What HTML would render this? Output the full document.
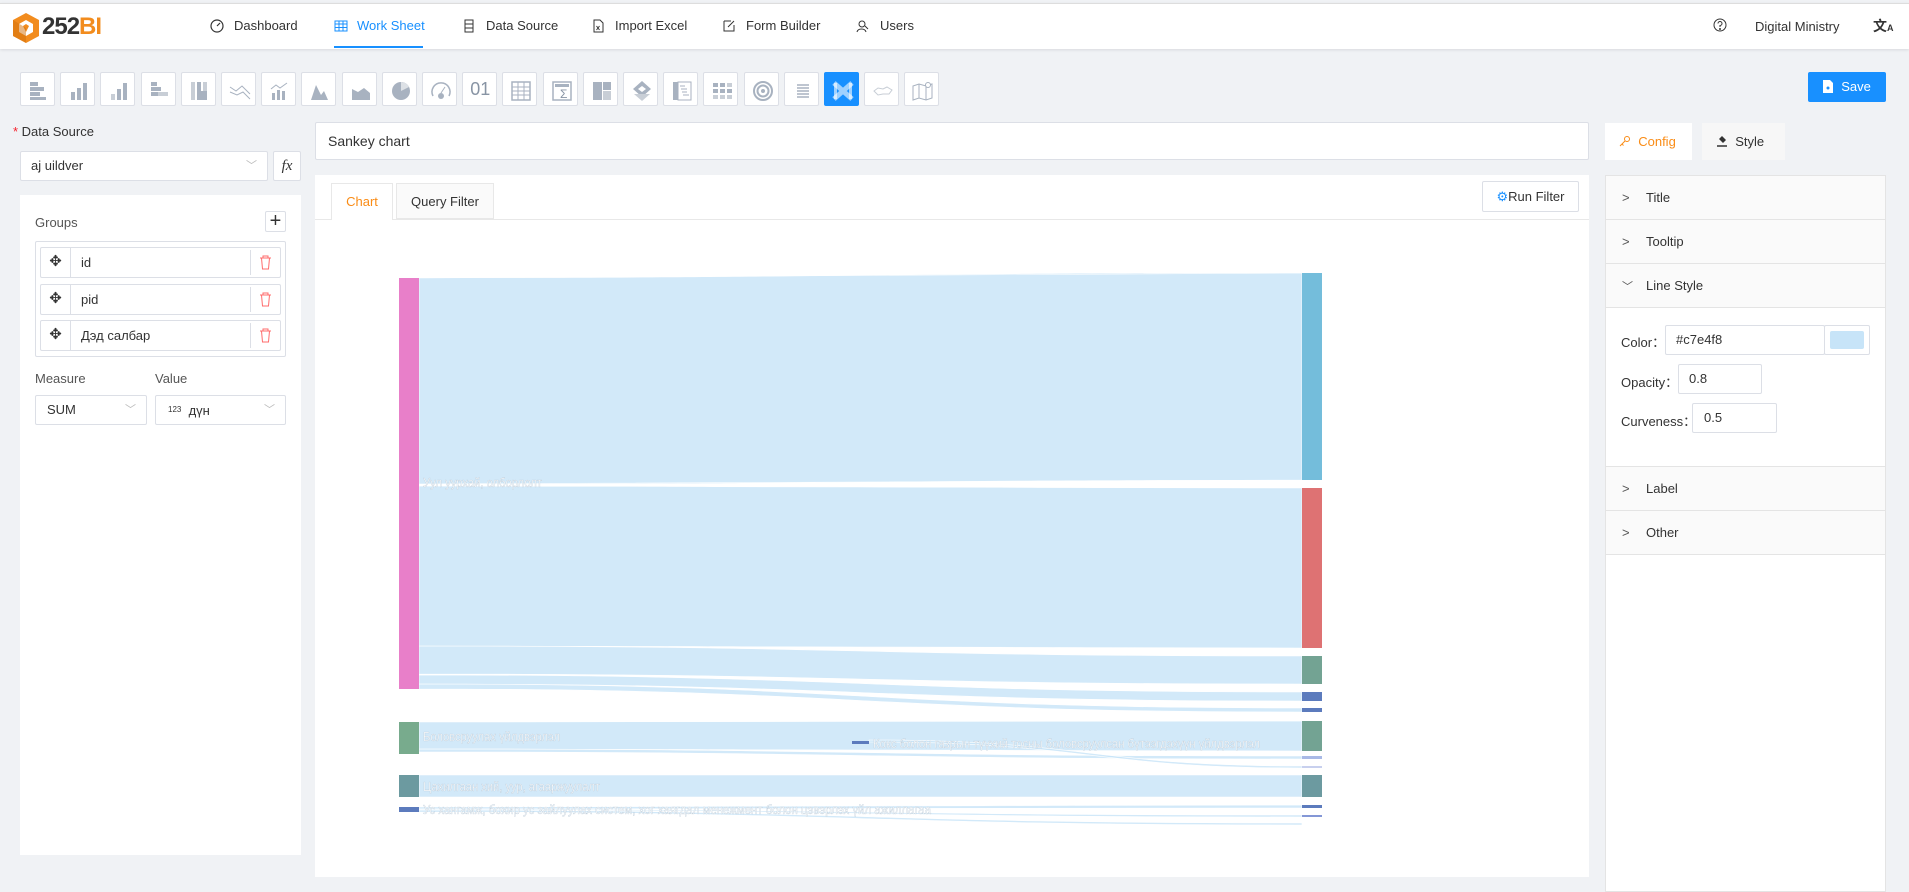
<!DOCTYPE html>
<html><head><meta charset="utf-8">
<style>
*{box-sizing:border-box;margin:0;padding:0}
body{width:1909px;height:892px;background:#f0f2f5;font-family:"Liberation Sans","Noto Sans CJK SC",sans-serif;font-size:13px;color:#333;position:relative;overflow:hidden}
.abs{position:absolute}
.hdr{left:0;top:3px;width:1909px;height:46px;background:#fff;border-top:1px solid #ddd;box-shadow:0 1px 3px rgba(0,0,0,.1)}
.nav{top:18px;font-size:13px;color:#333;display:flex;align-items:center;gap:6px}
.tb{top:72px;width:35px;height:34px;background:#fff;border:1px solid #dcdfe6;border-radius:2px}
.tb svg{position:absolute;left:6px;top:6px}
.box{background:#fff;border:1px solid #dcdfe6;border-radius:2px}
.row{background:#fafafa;border-bottom:1px solid #e4e4e4;height:44px;line-height:44px;padding-left:16px;font-size:13px;color:#333;position:absolute;left:0;width:100%}
.row span.ch{display:inline-block;width:24px;color:#555}
.lbl{font-size:13px;color:#333}
</style></head><body>

<div class="abs hdr"></div>
<svg class="abs" style="left:10px;top:12px" width="32" height="32" viewBox="0 0 32 32"><path d="M16 1 L29 8 L29 24 L16 31 L3 24 L3 8Z" fill="#f28c1e"/><path d="M16 8 L23 12 L23 20 L16 24 L9 20 L9 12Z" fill="#fff"/><path d="M16 12 L19 14 L16 20 L13 14Z" fill="#f28c1e"/><path d="M3 8 L16 16 L16 31 L3 24Z" fill="#d16f0a" opacity=".5"/></svg>
<div class="abs" style="left:42px;top:13px;font-size:24px;font-weight:bold;color:#333;letter-spacing:-1px">252<span style="color:#f28c1e">BI</span></div>

<div class="abs nav" style="left:210px"><svg width="14" height="14" viewBox="0 0 14 14"><circle cx="7" cy="7" r="6" fill="none" stroke="#333" stroke-width="1.2"/><path d="M7 7 L10 4" stroke="#333" stroke-width="1.2"/></svg><span style="margin-left:4px">Dashboard</span></div>
<div class="abs nav" style="left:334px;color:#1890ff"><svg width="14" height="14" viewBox="0 0 14 14" fill="none" stroke="#1890ff"><rect x="1" y="2" width="12" height="10"/><path d="M1 5h12M1 8.5h12M5 2v10M9 2v10"/></svg><span style="margin-left:3px">Work Sheet</span></div>
<div class="abs" style="left:334px;top:46px;width:89px;height:2px;background:#1890ff"></div>
<div class="abs nav" style="left:462px"><svg width="14" height="14" viewBox="0 0 14 14" fill="none" stroke="#333"><rect x="3" y="1" width="8" height="12"/><path d="M3 5h8M3 9h8"/></svg><span style="margin-left:4px">Data Source</span></div>
<div class="abs nav" style="left:591px"><svg width="14" height="14" viewBox="0 0 14 14" fill="none" stroke="#333"><path d="M3 1h6l3 3v9H3z"/><path d="M5.5 7l3 4M8.5 7l-3 4"/></svg><span style="margin-left:4px">Import Excel</span></div>
<div class="abs nav" style="left:722px"><svg width="14" height="14" viewBox="0 0 14 14" fill="none" stroke="#333"><path d="M2 2h7M2 2v10h10V6"/><path d="M6 8l6-6"/></svg><span style="margin-left:4px">Form Builder</span></div>
<div class="abs nav" style="left:856px"><svg width="14" height="14" viewBox="0 0 14 14" fill="none" stroke="#333"><circle cx="6" cy="5" r="3"/><path d="M1 13c1-4 8-4 9 0M9 7l3 3"/></svg><span style="margin-left:4px">Users</span></div>
<svg class="abs" style="left:1713px;top:18px" width="14" height="14" viewBox="0 0 14 14" fill="none" stroke="#333"><circle cx="7" cy="7" r="6"/><path d="M5 5.5a2 2 0 1 1 2 2v1.5"/><circle cx="7" cy="11" r=".5"/></svg>
<div class="abs" style="left:1755px;top:19px;font-size:13px">Digital Ministry</div>
<div class="abs" style="left:1873px;top:16px;font-size:14px;font-weight:bold">文<span style="font-size:9px">A</span></div>

<div id="tbar"></div>
<script>
(function(){
var g='#a8b2c0',h='';
var icons=[
'<rect x="3" y="3" width="8" height="4" fill="G"/><rect x="3" y="8" width="14" height="4" fill="G"/><rect x="3" y="13" width="10" height="4" fill="G"/><rect x="3" y="18" width="16" height="3" fill="G"/>',
'<rect x="4" y="13" width="4" height="8" fill="G"/><rect x="10" y="9" width="4" height="12" fill="G"/><rect x="16" y="4" width="4" height="17" fill="G"/>',
'<rect x="4" y="15" width="4" height="6" fill="#c8ced6"/><rect x="10" y="10" width="4" height="11" fill="G"/><rect x="16" y="4" width="4" height="17" fill="G"/>',
'<rect x="3" y="3" width="6" height="4" fill="G"/><rect x="3" y="8" width="10" height="4" fill="G"/><rect x="3" y="13" width="7" height="4" fill="G"/><rect x="10" y="13" width="10" height="4" fill="#c8ced6"/>',
'<rect x="3" y="3" width="4" height="18" fill="#c8ced6"/><rect x="9" y="3" width="4" height="18" fill="G"/><rect x="15" y="3" width="4" height="18" fill="#c8ced6"/><rect x="9" y="12" width="10" height="9" fill="G"/>',
'<path d="M2 8l6 4 6-5 8 8M2 13l7 3 6-3 7 7" fill="none" stroke="G"/>',
'<rect x="4" y="14" width="3" height="7" fill="G"/><rect x="9" y="11" width="3" height="10" fill="G"/><rect x="14" y="12" width="3" height="9" fill="G"/><path d="M3 10l5-4 4 3 7-5" fill="none" stroke="G"/>',
'<path d="M3 21L8 6l5 10 3-4 4 9z" fill="G"/>',
'<path d="M3 21V10l6 3 6-4 6 5v7z" fill="G"/>',
'<circle cx="12" cy="12" r="9" fill="G"/><path d="M12 12V3a9 9 0 0 1 8 5z" fill="#dde1e6"/>',
'<path d="M4 17a9 9 0 1 1 16 0" fill="none" stroke="G" stroke-width="1.5"/><path d="M12 14l4-6" stroke="G"/><circle cx="12" cy="17" r="3" fill="G"/>',
'TEXT',
'<rect x="3" y="3" width="18" height="18" fill="none" stroke="G" stroke-width="1.5"/><path d="M3 8h18M3 12h18M3 16h18M9 3v18M15 3v18" stroke="G"/>',
'<rect x="3" y="3" width="18" height="18" fill="none" stroke="G" stroke-width="1.5"/><text x="10" y="19" font-size="12" fill="#8894a4">Σ</text><rect x="5" y="5" width="14" height="3" fill="G"/>',
'<rect x="3" y="3" width="9" height="18" fill="G"/><rect x="13" y="3" width="8" height="8" fill="G"/><rect x="13" y="12" width="8" height="9" fill="#c8ced6"/>',
'<path d="M12 2l9 8-9 8-9-8z" fill="G"/><path d="M12 7l4 3-4 3-4-3z" fill="#fff"/><path d="M4 15l8 7 8-7" fill="#c8ced6"/>',
'<rect x="3" y="3" width="5" height="18" fill="G"/><rect x="8" y="3" width="13" height="18" fill="none" stroke="G"/><path d="M10 7h5M11 10h6M12 13h5M13 16h6" stroke="G"/>',
'<rect x="3" y="4" width="5" height="4" fill="G"/><rect x="10" y="4" width="5" height="4" fill="G"/><rect x="17" y="4" width="5" height="4" fill="#c8ced6"/><rect x="3" y="10" width="5" height="4" fill="G"/><rect x="10" y="10" width="5" height="4" fill="G"/><rect x="17" y="10" width="5" height="4" fill="G"/><rect x="3" y="16" width="5" height="4" fill="#c8ced6"/><rect x="10" y="16" width="5" height="4" fill="#c8ced6"/><rect x="17" y="16" width="5" height="4" fill="#c8ced6"/>',
'<circle cx="12" cy="12" r="9" fill="none" stroke="G" stroke-width="2"/><circle cx="12" cy="12" r="5.5" fill="none" stroke="G" stroke-width="2"/><circle cx="12" cy="12" r="2" fill="G"/>',
'<path d="M6 6h12M6 9h12M6 12h12M6 15h12M6 18h12" stroke="G" stroke-width="1.5"/>',
'<path d="M3 4l18 16M3 20L21 4" stroke="#9fd1ff" stroke-width="5"/><rect x="3" y="4" width="3" height="16" fill="#fff" opacity=".6"/><rect x="18" y="4" width="3" height="16" fill="#fff" opacity=".6"/>',
'<path d="M3 12l4-3 5 1 4-2 5 3-3 4-6 0-5 1z" fill="none" stroke="#c8ced6"/>',
'<path d="M2 7l6-2 7 2 6-2v14l-6 2-7-2-6 2z M8 5v14M15 7v14" fill="none" stroke="G"/><circle cx="17" cy="6" r="2.5" fill="#fff" stroke="G"/>'
];
for(var i=0;i<23;i++){
 var x=20+i*40.2, sel=i==20;
 var inner=icons[i].replace(/"G"/g,'"'+g+'"');
 var s=inner=='TEXT'?'<div style="position:absolute;left:7px;top:6px;font-size:18px;color:#8894a4">01</div>':'<svg width="24" height="24" viewBox="0 0 24 24">'+inner+'</svg>';
 h+='<div class="abs tb" style="left:'+x+'px;'+(sel?'background:#1890ff;border-color:#1890ff':'')+'">'+s+'</div>';
}
document.getElementById('tbar').innerHTML=h;
})();
</script>

<div class="abs" style="left:1808px;top:72px;width:78px;height:30px;background:#1890ff;border-radius:2px;color:#fff;font-size:13px;line-height:30px;padding-left:14px"><svg width="12" height="13" viewBox="0 0 12 13" style="vertical-align:-2px"><path d="M1 0h7l3 3v10H1z" fill="#fff"/><circle cx="6" cy="8" r="1.5" fill="#1890ff"/></svg> &nbsp;Save</div>

<div class="abs lbl" style="left:13px;top:124px;font-size:13px"><span style="color:#f5222d">* </span>Data Source</div>
<div class="abs box" style="left:20px;top:151px;width:248px;height:30px;line-height:28px;padding-left:10px;font-size:13px">aj uildver<span style="position:absolute;right:10px;color:#bbb;font-size:11px">﹀</span></div>
<div class="abs box" style="left:273px;top:151px;width:28px;height:30px;line-height:28px;text-align:center;font-style:italic;font-family:'Liberation Serif',serif;font-size:15px">fx</div>

<div class="abs" style="left:20px;top:195px;width:281px;height:660px;background:#fff"></div>
<div class="abs lbl" style="left:35px;top:215px;font-size:13px;color:#555">Groups</div>
<div class="abs box" style="left:265px;top:211px;width:21px;height:21px;line-height:18px;text-align:center;font-size:20px;font-weight:300">+</div>
<div class="abs box" style="left:35px;top:241px;width:251px;height:116px"></div>
<div id="grp"></div>
<script>
var n=['id','pid','Дэд салбар'],t=[247,284,320],q='';
for(var i=0;i<3;i++){q+='<div class="abs box" style="left:40px;top:'+t[i]+'px;width:241px;height:31px"><div style="position:absolute;left:0;top:0;width:30px;height:29px;border-right:1px solid #dcdfe6;text-align:center;line-height:28px;font-size:15px">✥</div><div style="position:absolute;left:40px;top:7px;font-size:13px">'+n[i]+'</div><div style="position:absolute;left:209px;top:2px;width:1px;height:25px;background:#dcdfe6"></div><svg style="position:absolute;left:218px;top:7px" width="13" height="15" viewBox="0 0 13 15" fill="none" stroke="#ff6b6b"><path d="M1 3h11M4 3V1h5v2M2.5 3l1 11h6l1-11"/></svg></div>';}
document.getElementById('grp').innerHTML=q;
</script>
<div class="abs lbl" style="left:35px;top:371px;font-size:13px;color:#555">Measure</div>
<div class="abs lbl" style="left:155px;top:371px;font-size:13px;color:#555">Value</div>
<div class="abs box" style="left:35px;top:395px;width:112px;height:30px;line-height:28px;padding-left:11px">SUM<span style="position:absolute;right:10px;color:#bbb;font-size:11px">﹀</span></div>
<div class="abs box" style="left:155px;top:395px;width:131px;height:30px;line-height:28px;padding-left:12px"><span style="font-size:8px;vertical-align:3px">123</span>&nbsp; дүн<span style="position:absolute;right:10px;color:#bbb;font-size:11px">﹀</span></div>

<div class="abs box" style="left:315px;top:122px;width:1274px;height:38px;line-height:36px;padding-left:12px;font-size:14px">Sankey chart</div>
<div class="abs" style="left:315px;top:175px;width:1274px;height:702px;background:#fff"></div>
<div class="abs" style="left:315px;top:219px;width:1274px;height:1px;background:#e8e8e8"></div>
<div class="abs" style="left:331px;top:183px;width:62px;height:37px;background:#fff;border:1px solid #e8e8e8;border-bottom:none;color:#fa8c16;text-align:center;line-height:36px;font-size:13px">Chart</div>
<div class="abs" style="left:396px;top:183px;width:98px;height:36px;background:#fafafa;border:1px solid #e8e8e8;text-align:center;line-height:35px;font-size:13px">Query Filter</div>
<div class="abs box" style="left:1482px;top:181px;width:97px;height:31px;line-height:29px;text-align:center;font-size:13px"><span style="color:#1890ff">⚙</span>Run Filter</div>

<svg class="abs" style="left:0;top:0" width="1909" height="892">
<g fill="#c7e4f8" fill-opacity=".8" stroke="#fff" stroke-width=".6">
<path d="M419 278 C860 278 860 273 1302 273 L1302 480 C860 480 860 484 419 484Z"/>
<path d="M419 486 C860 486 860 488 1302 488 L1302 648 C860 648 860 646 419 646Z"/>
<path d="M419 646 C860 646 860 656 1302 656 L1302 684 C860 684 860 674 419 674Z"/>
<path d="M419 675 C860 675 860 692 1302 692 L1302 701 C860 701 860 684 419 684Z"/>
<path d="M419 684 C860 684 860 708 1302 708 L1302 712 C860 712 860 689 419 689Z"/>
<path d="M419 722 C860 722 860 721 1302 721 L1302 751 C860 751 860 749 419 749Z"/>
<path d="M419 749 C860 749 860 756 1302 756 L1302 759 C860 759 860 752 419 752Z"/>
<path d="M869 740 C1090 740 1090 766 1302 766 L1302 768 C1090 768 1090 742 869 742Z"/>
<path d="M419 775 C860 775 860 775 1302 775 L1302 797 C860 797 860 797 419 797Z"/>
<path d="M419 807 C860 807 860 805 1302 805 L1302 808 C860 808 860 809 419 809Z"/>
<path d="M419 809 C860 809 860 815 1302 815 L1302 817 C860 817 860 810 419 810Z"/>
<path d="M419 810 C860 810 860 823 1302 823 L1302 825 C860 825 860 812 419 812Z"/>
</g>
<rect x="399" y="278" width="20" height="411" fill="#e87fc9"/>
<rect x="1302" y="273" width="20" height="207" fill="#74bddb"/>
<rect x="1302" y="488" width="20" height="160" fill="#de7273"/>
<rect x="1302" y="656" width="20" height="28" fill="#73a393"/>
<rect x="1302" y="692" width="20" height="9" fill="#5c7bbd"/>
<rect x="1302" y="708" width="20" height="4" fill="#5c7bbd"/>
<rect x="399" y="722" width="20" height="32" fill="#78ab8d"/>
<rect x="1302" y="721" width="20" height="30" fill="#73a393"/>
<rect x="1302" y="756" width="20" height="3" fill="#a9b9e6"/>
<rect x="1302" y="766" width="20" height="2" fill="#c8d0ee"/>
<rect x="852" y="741" width="17" height="3" fill="#5c7bbd"/>
<rect x="399" y="775" width="20" height="22" fill="#6c9aa0"/>
<rect x="1302" y="775" width="20" height="22" fill="#6c9aa0"/>
<rect x="399" y="807" width="20" height="5" fill="#5c7bbd"/>
<rect x="1302" y="805" width="20" height="3" fill="#5c7bbd"/>
<rect x="1302" y="815" width="20" height="2" fill="#8497d6"/>
<g font-family="Liberation Sans, sans-serif" font-size="13" fill="#fff" stroke="#b8c8d6" stroke-width=".35" lengthAdjust="spacingAndGlyphs">
<text x="423" y="487" textLength="119" lengthAdjust="spacingAndGlyphs">Уул уурхай, олборлолт</text>
<text x="423" y="741" textLength="137" lengthAdjust="spacingAndGlyphs">Боловсруулах үйлдвэрлэл</text>
<text x="873" y="748" textLength="387" lengthAdjust="spacingAndGlyphs">Кокс болон газрын түүхий тосны боловсруулсан бүтээгдэхүүн үйлдвэрлэл</text>
<text x="423" y="791" textLength="177" lengthAdjust="spacingAndGlyphs">Цахилгаан хий, уур, агааржуулалт</text>
<text x="423" y="814" textLength="508" lengthAdjust="spacingAndGlyphs">Ус хангамж, бохир ус зайлуулах систем, хог хаягдал менежмент болон цэвэрлэх үйл ажиллагаа</text>
</g>
</svg>

<div class="abs" style="left:1605px;top:123px;width:87px;height:37px;background:#fff;color:#fa8c16;line-height:37px;padding-left:14px;font-size:13px"><svg width="12" height="12" viewBox="0 0 12 12" fill="none" stroke="#fa8c16" style="vertical-align:-1px"><circle cx="8" cy="4" r="2.5"/><path d="M6 6L1 11M3 9l1.5 1.5"/></svg>&nbsp; Config</div>
<div class="abs" style="left:1702px;top:123px;width:83px;height:37px;background:#f7f7f7;line-height:37px;padding-left:14px;font-size:13px"><svg width="12" height="12" viewBox="0 0 12 12" style="vertical-align:-1px"><path d="M6 1l4 4-3 3-4-4z" fill="#333"/><path d="M1 11h10" stroke="#333" stroke-width="1.5"/></svg>&nbsp; Style</div>
<div class="abs" style="left:1605px;top:175px;width:281px;height:717px;background:#fff;border:1px solid #e4e4e4">
 <div class="row" style="top:0"><span class="ch">&gt;</span>Title</div>
 <div class="row" style="top:44px"><span class="ch">&gt;</span>Tooltip</div>
 <div class="row" style="top:88px"><span class="ch" style="font-size:11px">﹀</span>Line Style</div>
 <div class="abs lbl" style="left:15px;top:156px;font-size:13px">Color：</div>
 <div class="abs box" style="left:59px;top:149px;width:160px;height:30px;line-height:28px;padding-left:10px;font-size:13px">#c7e4f8</div>
 <div class="abs box" style="left:218px;top:149px;width:46px;height:30px"><div style="margin:5px;width:34px;height:18px;background:#c7e4f8;border-radius:2px"></div></div>
 <div class="abs lbl" style="left:15px;top:196px">Opacity：</div>
 <div class="abs box" style="left:72px;top:188px;width:84px;height:30px;line-height:28px;padding-left:10px;font-size:13px">0.8</div>
 <div class="abs lbl" style="left:15px;top:235px">Curveness：</div>
 <div class="abs box" style="left:86px;top:227px;width:85px;height:30px;line-height:28px;padding-left:11px;font-size:13px">0.5</div>
 <div class="row" style="top:290px;border-top:1px solid #e4e4e4;height:45px"><span class="ch">&gt;</span>Label</div>
 <div class="row" style="top:335px"><span class="ch">&gt;</span>Other</div>
</div>
</body></html>
